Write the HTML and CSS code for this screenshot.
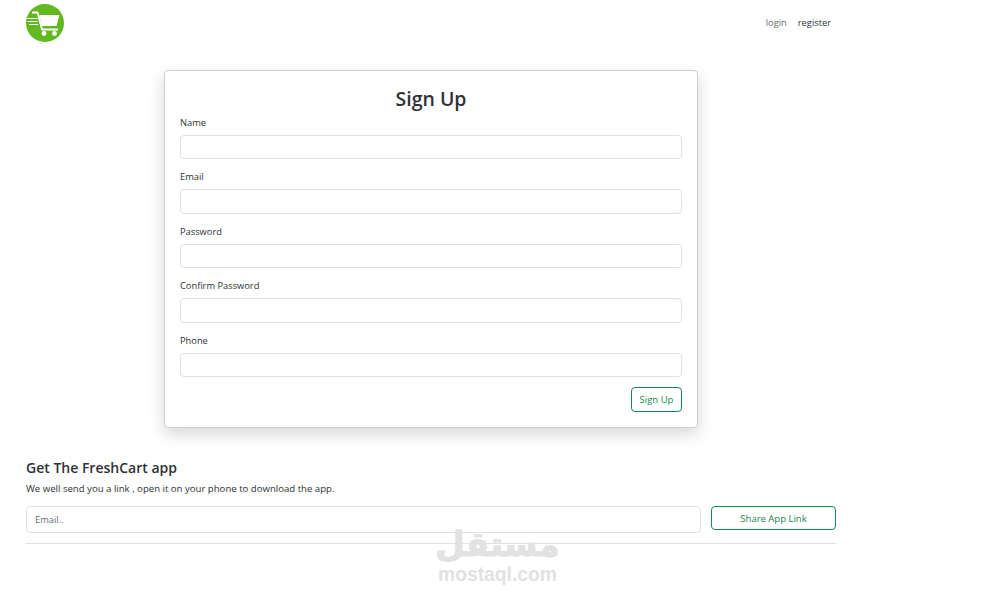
FILE: index.html
```html
<!DOCTYPE html>
<html lang="en">
<head>
    <meta charset="UTF-8">
    <meta name="viewport" content="width=device-width, initial-scale=1.0">
    <title>FreshCart - Sign Up</title>
    <link rel="stylesheet" href="styles.css">
</head>
<body>
    <div class="container">
        <nav class="navbar">
            <svg class="logo" viewBox="0 0 38 38" width="38" height="38">
                <circle cx="19" cy="19" r="19" fill="#62b81f"/>
                <path d="M6 8.5h5.5l4.5 17h16" fill="none" stroke="#fff" stroke-width="1.8"/>
                <path d="M13 11h20.5l-3 11h-14.500z" fill="#fff"/>
                <path d="M0.500 14.500h11M1.500 17.500h10M3 20.500h9" fill="none" stroke="#62b81f" stroke-width="3.200"/>
                <path d="M0.500 14.500h11M1.500 17.500h10M3 20.500h9" fill="none" stroke="#fff" stroke-width="1.200"/>
                <circle cx="18" cy="29.500" r="2.400" fill="#fff"/>
                <circle cx="28.500" cy="29.500" r="2.400" fill="#fff"/>
            </svg>
            <div class="nav-links">
                <a class="muted" href="#">login</a>
                <a href="#">register</a>
            </div>
        </nav>

        <form class="card">
            <h1>Sign Up</h1>
            <div class="field">
                <label>Name</label>
                <input type="text">
            </div>
            <div class="field">
                <label>Email</label>
                <input type="email">
            </div>
            <div class="field">
                <label>Password</label>
                <input type="password">
            </div>
            <div class="field">
                <label>Confirm Password</label>
                <input type="password">
            </div>
            <div class="field">
                <label>Phone</label>
                <input type="text">
            </div>
            <div class="actions">
                <button type="button" class="btn">Sign Up</button>
            </div>
        </form>

        <section class="app">
            <h2>Get The FreshCart app</h2>
            <p>We well send you a link , open it on your phone to download the app.</p>
            <div class="share">
                <input type="text" placeholder="Email..">
                <button type="button" class="btn btn-wide">Share App Link</button>
            </div>
        </section>
    </div>

    <div class="watermark">
        <div class="wm-ar" dir="rtl" lang="ar">مستقل</div>
        <div class="wm-en">mostaql.com</div>
    </div>
</body>
</html>
```

FILE: styles.css
```css
* {
    box-sizing: border-box;
}

body {
    margin: 0;
    font-family: "Open Sans", "Noto Sans", sans-serif;
    color: #2e3236;
    background-color: #fff;
    overflow: hidden;
}

.container {
    width: 810px;
    margin-left: 26px;
}

.navbar {
    display: flex;
    justify-content: space-between;
    align-items: center;
    height: 46px;
    padding-right: 5px;
}

.logo {
    display: block;
}

.nav-links {
    display: flex;
    gap: 11px;
    margin-top: -1px;
    font-size: 9.3px;
}

.nav-links a {
    color: #2e3236;
    text-decoration: none;
}

.nav-links a.muted {
    color: #6a6d70;
}

.card {
    width: 534px;
    height: 358px;
    margin: 24px 0 0 138px;
    padding: 15px 15px 0;
    background-color: #fff;
    border: 1px solid #cfcfcf;
    border-radius: 4px;
    box-shadow: 0 6px 16px rgba(0, 0, 0, 0.16);
}

h1 {
    margin: 0;
    height: 29.75px;
    font-size: 19.500px;
    font-weight: 600;
    line-height: 26px;
    text-align: center;
}

.field {
    height: 54.5px;
}

label {
    display: block;
    height: 19px;
    font-size: 9.3px;
    line-height: 13px;
}

input {
    display: block;
    width: 100%;
    height: 24.4px;
    padding: 0 8px;
    font-family: inherit;
    font-size: 9.3px;
    background-color: #fff;
    border: 1px solid #dee2e6;
    border-radius: 4px;
    outline: none;
}

input::placeholder {
    color: #6a6d70;
}

.actions {
    display: flex;
    justify-content: flex-end;
    margin-top: -1.5px;
}

.btn {
    width: 51px;
    height: 25px;
    padding: 0;
    font-family: inherit;
    font-size: 9.5px;
    color: #198754;
    background-color: #fff;
    border: 1px solid #198754;
    border-radius: 4px;
}

.btn-wide {
    flex: none;
    width: 125px;
    height: 24px;
}

.app {
    margin-top: 30px;
}

h2 {
    margin: 0;
    font-size: 14px;
    font-weight: 600;
    line-height: 19px;
}

.app p {
    margin: 5px 0 0;
    font-size: 9.6px;
    line-height: 13px;
}

.share {
    display: flex;
    align-items: flex-start;
    gap: 10px;
    height: 38px;
    margin-top: 11px;
    border-bottom: 1px solid #dee2e6;
}

.share input {
    height: 27px;
}

.watermark {
    position: absolute;
    left: 420px;
    top: 523px;
    width: 155px;
    text-align: center;
    color: #e2e2e2;
}

.wm-ar {
    font-family: "DejaVu Sans", sans-serif;
    font-size: 34px;
    font-weight: 700;
    line-height: 42px;
    -webkit-text-stroke: 1px #e2e2e2;
}

.wm-en {
    font-family: "Liberation Sans", sans-serif;
    font-size: 19.3px;
    font-weight: 700;
    line-height: 20px;
}
```
